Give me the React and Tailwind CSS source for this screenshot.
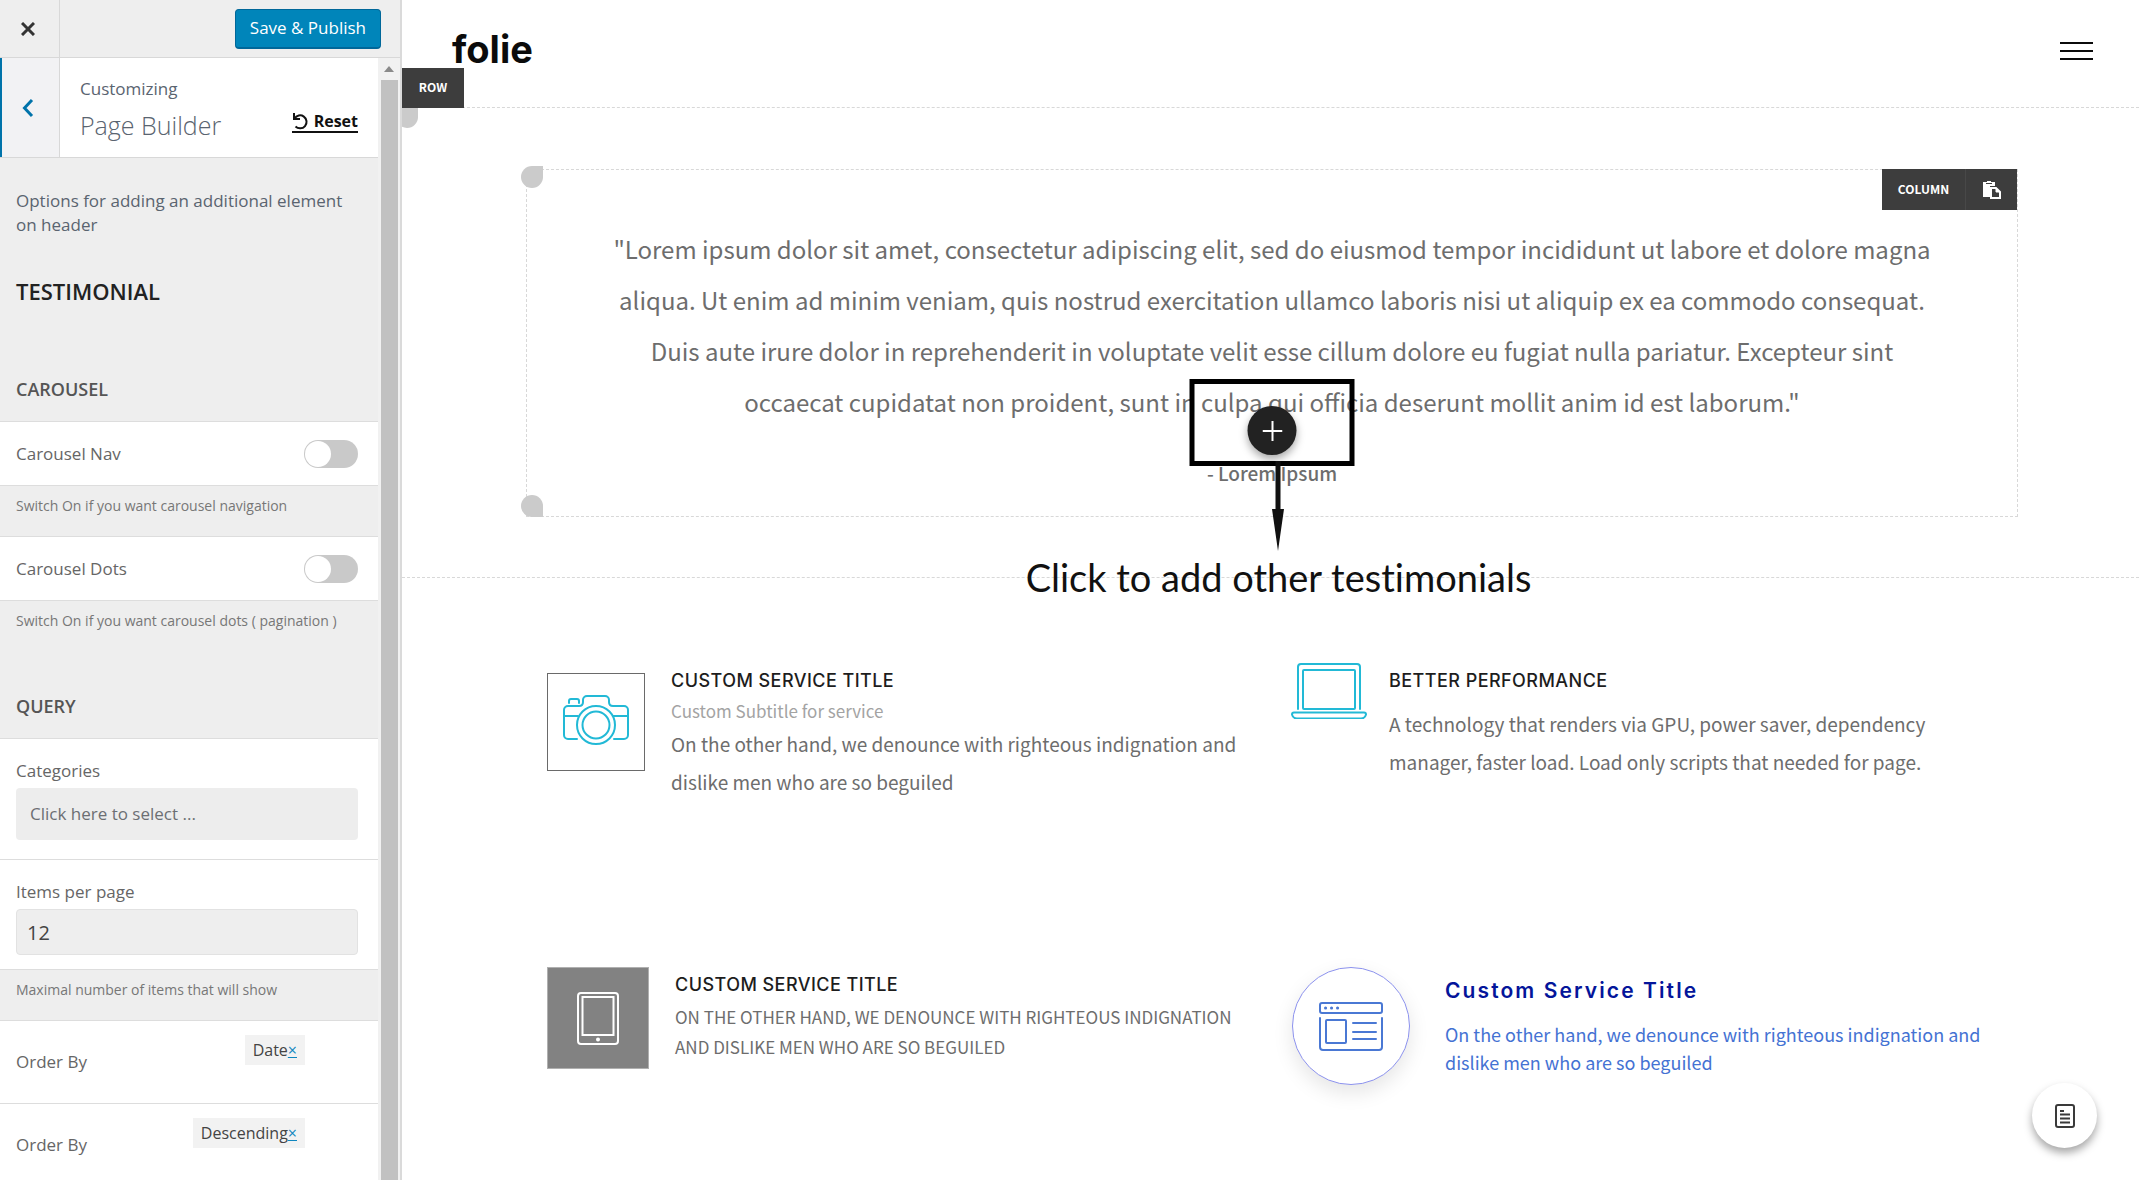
import React from "react";

const sans = "font-['Open_Sans','Noto_Sans',sans-serif]";
const body = "font-['Noto_Sans_CJK_SC','Noto_Sans',sans-serif]";
const capsTitle = "font-['Inter',sans-serif] text-lg leading-7 font-medium tracking-wide text-[#1d1d1d]";

function CameraIcon() {
  return (
    <svg viewBox="0 0 66 50" className="h-[50px] w-[66px]" fill="none" stroke="#22b9d6" strokeWidth="2" strokeLinecap="round">
      <path d="M14 44H5a4 4 0 0 1-4-4V15a4 4 0 0 1 4-4h11c3 0 4-1 4-4V5a4 4 0 0 1 4-4h18a4 4 0 0 1 4 4v2c0 3 1 4 4 4h11a4 4 0 0 1 4 4v25a4 4 0 0 1-4 4h-10" />
      <path d="M6 8V6a2 2 0 0 1 2-2h6a2 2 0 0 1 2 2v2M1 21h14M50 21h15" />
      <circle cx="33" cy="30" r="19" />
      <circle cx="33" cy="30" r="13.500" />
    </svg>
  );
}

function LaptopIcon() {
  return (
    <svg viewBox="0 0 76 56" className="h-14 w-[76px] shrink-0" fill="none" stroke="#22b9d6" strokeWidth="2" strokeLinecap="round">
      <path d="M7 46V4a3 3 0 0 1 3-3h56a3 3 0 0 1 3 3v42" />
      <rect x="12" y="7" width="52" height="39" rx="1" />
      <path d="M3 49.500h70q2 0 2 2v0q-1 4-5 4H6q-4 0-5-4v0q0-2 2-2z" />
    </svg>
  );
}

function TabletIcon() {
  return (
    <svg viewBox="0 0 42 53" className="h-[53px] w-[42px]" fill="none" stroke="#ffffff" strokeWidth="2">
      <rect x="1" y="1" width="40" height="51" rx="3" />
      <rect x="5.500" y="5" width="31" height="38" />
      <circle cx="21" cy="47.500" r="1" fill="#ffffff" />
    </svg>
  );
}

function BrowserIcon() {
  return (
    <svg viewBox="0 0 64 49" className="h-[49px] w-16" fill="none" stroke="#4a78d4" strokeWidth="2" strokeLinecap="round">
      <rect x="1" y="1" width="62" height="10" rx="2" />
      <path d="M1 16v29a3 3 0 0 0 3 3h56a3 3 0 0 0 3-3V16" />
      <rect x="7" y="18" width="20" height="23" rx="1" />
      <path d="M34 21h23M34 30h23M34 37h23" />
      <path d="M6.500 6h.1M12.500 6h.1M18.500 6h.1" strokeWidth="3" />
    </svg>
  );
}

function Handle({ className }) {
  return <span className={`absolute size-[22px] rounded-full bg-[#cbcbcb] ${className}`} />;
}

function Toggle({ label, id }) {
  return (
    <div className="flex h-[64px] items-center justify-between border-b border-[#dddddd] bg-white pr-5 pl-4">
      <label htmlFor={id} className="text-[17px] text-[#666666]">{label}</label>
      <input
        id={id}
        type="checkbox"
        role="switch"
        className="h-7 w-[54px] cursor-pointer appearance-none rounded-full bg-[#c9c9c9] p-px before:block before:size-[26px] before:rounded-full before:bg-white checked:bg-[#0085ba] checked:before:ml-auto"
      />
    </div>
  );
}

function Hint({ children }) {
  return <p className="h-[51px] border-b border-[#dddddd] px-4 pt-2 text-sm leading-6 text-[#777777]">{children}</p>;
}

function GroupTitle({ children }) {
  return <h3 className="px-4 text-lg leading-6 font-semibold text-[#555555]">{children}</h3>;
}

function OrderRow({ value }) {
  return (
    <div className="flex h-[83px] items-center justify-between border-b border-[#dddddd] bg-white pr-[73px] pl-4">
      <span className="text-[17px] text-[#666666]">Order By</span>
      <span className="mb-6 flex h-[30px] items-center bg-[#f2f2f2] px-2 text-base text-[#444444]">
        {value}
        <a href="#remove" aria-label={`Remove ${value}`} className="text-[#0e86bf] underline">×</a>
      </span>
    </div>
  );
}

function Sidebar() {
  return (
    <aside className={`flex w-[402px] shrink-0 flex-col border-r-2 border-[#dadada] bg-[#eeeeee] ${sans}`}>
      <div className="flex h-[58px] shrink-0 items-center justify-between border-b border-[#d8d8d8] pr-[19px]">
        <button aria-label="Close" className="flex h-full w-[60px] items-center justify-center border-r border-[#d8d8d8] pr-1">
          <svg viewBox="0 0 14 14" className="size-3.5" stroke="#333333" strokeWidth="3"><path d="M1 1l12 12M13 1L1 13" /></svg>
        </button>
        <button className="h-10 rounded-[4px] border border-b-2 border-[#006799] bg-[#0085ba] px-3.5 text-[17px] text-white">
          Save &amp; Publish
        </button>
      </div>
      <div className="flex flex-1">
        <div className="flex min-w-0 flex-1 flex-col">
          <div className="flex h-[100px] shrink-0 border-b border-[#d8d8d8] bg-white">
            <button aria-label="Back" className="flex w-[60px] shrink-0 items-center justify-center border-r border-l-2 border-r-[#d8d8d8] border-l-[#0073aa] bg-[#f2f2f4] pr-1.5">
              <svg viewBox="0 0 12 20" className="h-5 w-3" fill="none" stroke="#0073aa" strokeWidth="3"><path d="M10 2L2.500 10l7.500 8" /></svg>
            </button>
            <div className="flex flex-1 items-end justify-between pr-5 pb-4 pl-5">
              <div className="text-[#5a6470]">
                <div className="text-[17px] leading-6">Customizing</div>
                <h1 className="mt-2 text-[25px] leading-8 font-light">Page Builder</h1>
              </div>
              <button className="mb-2 flex items-center gap-1.5 border-b-2 border-[#111111] text-base leading-5 font-bold text-[#111111]">
                <svg viewBox="0 0 16 18" className="h-[18px] w-4" fill="none" stroke="#111111" strokeWidth="2"><path d="M2 1v6h6M2.500 6.500a6.500 6.500 0 1 1 1 8" /></svg>
                Reset
              </button>
            </div>
          </div>
          <p className="mt-[31px] px-4 text-[17px] leading-6 text-[#5a6470]">Options for adding an additional element on header</p>
          <h2 className="mt-10 px-4 text-[22px] leading-7 font-semibold text-[#222222]">TESTIMONIAL</h2>
          <div className="mt-[72px] border-b border-[#dddddd] pb-5"><GroupTitle>CAROUSEL</GroupTitle></div>
          <Toggle id="nav" label="Carousel Nav" />
          <Hint>Switch On if you want carousel navigation</Hint>
          <Toggle id="dots" label="Carousel Dots" />
          <p className="px-4 pt-2 text-sm leading-6 text-[#777777]">Switch On if you want carousel dots ( pagination )</p>
          <div className="mt-[61px] border-b border-[#dddddd] pb-5"><GroupTitle>QUERY</GroupTitle></div>
          <div className="border-b border-[#dddddd] bg-white px-4 pt-5 pb-[19px]">
            <label htmlFor="categories" className="block text-[17px] leading-6 text-[#666666]">Categories</label>
            <select id="categories" className="mt-[5px] block h-[52px] w-[342px] appearance-none rounded-[4px] bg-[#ededed] px-3.5 text-[17px] text-[#6c6f73]">
              <option>Click here to select ...</option>
            </select>
          </div>
          <div className="border-b border-[#dddddd] bg-white px-4 pt-5 pb-[14px]">
            <label htmlFor="items" className="block text-[17px] leading-6 text-[#666666]">Items per page</label>
            <input id="items" defaultValue="12" className="mt-[5px] block h-[46px] w-[342px] rounded-[4px] border border-[#e2e2e2] bg-[#eeeeee] px-2.5 text-xl text-[#444444]" />
          </div>
          <Hint>Maximal number of items that will show</Hint>
          <OrderRow value="Date" />
          <div className="flex-1 bg-white"><OrderRow value="Descending" /></div>
        </div>
        <div className="flex w-[22px] shrink-0 flex-col items-center bg-[#f1f1f1] pt-2">
          <svg viewBox="0 0 10 6" className="h-1.5 w-2.5" fill="#8a8a8a"><path d="M0 6L5 0l5 6z" /></svg>
          <div className="mt-2 w-[17px] flex-1 bg-[#c1c1c1]" />
        </div>
      </div>
    </aside>
  );
}

function Testimonial() {
  return (
    <section className="relative border-b border-dashed border-[#d8d8d8] pt-[61px] pr-[121px] pb-[60px] pl-[124px]">
      <div className="absolute top-0 left-0 h-5 w-4 overflow-hidden">
        <span className="-mt-0.5 -ml-1.5 block size-[22px] rounded-full rounded-tr-none bg-[#cbcbcb]" />
      </div>
      <span className="absolute -top-10 left-0 flex h-10 w-[62px] items-center justify-center bg-[#3d3d3d] pb-0.5 text-xs font-bold text-white">ROW</span>
      <div className="relative border border-dashed border-[#d8d8d8] px-[74px] pt-[53px] pb-7 text-center text-[#6d6d6d]">
        <Handle className="-top-1 -left-1.5 rounded-tr-none" />
        <Handle className="-bottom-px -left-1.5 rounded-br-none" />
        <div className="absolute -top-px right-0 flex h-[41px] items-stretch bg-[#3d3d3d] text-xs font-bold text-white">
          <span className="flex w-[84px] items-center justify-center border-r border-[#484848] pb-0.5">COLUMN</span>
          <button aria-label="Paste" className="flex w-[51px] items-center justify-center">
            <svg viewBox="0 0 18 18" className="size-[18px]">
              <path d="M0 1h4V0h4v1h4v4H7v11H0z" fill="#ffffff" />
              <path d="M3 2.500h6" stroke="#3d3d3d" />
              <path d="M8 7h5l4 4v6H8z" fill="#3d3d3d" stroke="#ffffff" strokeWidth="2" />
              <path d="M13 7v4h4" fill="#ffffff" stroke="#ffffff" />
            </svg>
          </button>
        </div>
        <blockquote className="text-2xl leading-[51px]">
          "Lorem ipsum dolor sit amet, consectetur adipiscing elit, sed do eiusmod tempor incididunt ut labore et dolore magna aliqua. Ut enim ad minim veniam, quis nostrud exercitation ullamco laboris nisi ut aliquip ex ea commodo consequat. Duis aute irure dolor in reprehenderit in voluptate velit esse cillum dolore eu fugiat nulla pariatur. Excepteur sint occaecat cupidatat non proident, sunt in culpa qui officia deserunt mollit anim id est laborum."
        </blockquote>
        <p className="mt-8 mb-px text-[19px] leading-7 font-medium">- Lorem Ipsum</p>
        <div className="absolute bottom-[50px] left-1/2 flex h-[87px] w-[165px] -translate-x-1/2 items-center justify-center border-5 border-black">
          <button aria-label="Add testimonial" className="mt-4 flex size-[49px] items-center justify-center rounded-full bg-[#222222] shadow-[0_4px_8px_rgba(0,0,0,0.35)]">
            <svg viewBox="0 0 20 20" className="size-5" stroke="#ffffff" strokeWidth="2"><path d="M10 0v20M0 10h20" /></svg>
          </button>
        </div>
        <svg viewBox="0 0 12 90" className="absolute -bottom-[35px] left-1/2 h-[90px] w-3" fill="#111111"><path d="M3.500 0h5v48h3.500L6 90 0 48h3.500z" /></svg>
      </div>
      <p className="absolute bottom-0 left-1/2 -translate-x-1/2 translate-y-1/2 pl-4 font-['Lato',sans-serif] text-[38px] leading-[48px] whitespace-nowrap text-[#111111] [font-variant-ligatures:none]">
        Click to add other testimonials
      </p>
    </section>
  );
}

function Services() {
  return (
    <section className="grid auto-rows-[304px] grid-cols-2 pt-[85px] pr-[121px] pl-[124px] text-[#6d6d6d]">
      <article className="flex items-start gap-[26px] pr-5 pl-[21px]">
        <div className="mt-2.5 flex size-[98px] shrink-0 items-center justify-center border border-[#6a6a6a] pb-1"><CameraIcon /></div>
        <div className="pt-1">
          <h3 className={capsTitle}>CUSTOM SERVICE TITLE</h3>
          <p className="mt-0.5 text-[17px] leading-7 text-[#a3a3a3]">Custom Subtitle for service</p>
          <p className="text-[19px] leading-[38px]">On the other hand, we denounce with righteous indignation and dislike men who are so beguiled</p>
        </div>
      </article>
      <article className="flex items-start gap-[22px] pr-5 pl-[19px]">
        <LaptopIcon />
        <div className="pt-1">
          <h3 className={capsTitle}>BETTER PERFORMANCE</h3>
          <p className="mt-2.5 max-w-[580px] text-[19px] leading-[38px]">A technology that renders via GPU, power saver, dependency manager, faster load. Load only scripts that needed for page.</p>
        </div>
      </article>
      <article className="flex items-start gap-[26px] pr-5 pl-[21px]">
        <div className="flex size-[102px] shrink-0 items-center justify-center border border-[#b0b0b0] bg-[#828282]"><TabletIcon /></div>
        <div className="pt-1">
          <h3 className={capsTitle}>CUSTOM SERVICE TITLE</h3>
          <p className="mt-[3px] text-[17px] leading-[30px]">ON THE OTHER HAND, WE DENOUNCE WITH RIGHTEOUS INDIGNATION AND DISLIKE MEN WHO ARE SO BEGUILED</p>
        </div>
      </article>
      <article className="flex items-start gap-[35px] pr-5 pl-5">
        <div className="flex size-[118px] shrink-0 items-center justify-center rounded-full border border-[#8c92ee] bg-white shadow-[0_8px_20px_rgba(0,0,0,0.1)]"><BrowserIcon /></div>
        <div className="pt-2.5">
          <h3 className="font-['Inter',sans-serif] text-[21px] leading-7 font-semibold tracking-widest text-[#04159a]">Custom Service Title</h3>
          <p className="mt-[15px] text-lg leading-7 text-[#4472d3]">On the other hand, we denounce with righteous indignation and dislike men who are so beguiled</p>
        </div>
      </article>
    </section>
  );
}

export default function App() {
  return (
    <div className="flex h-screen overflow-hidden bg-white">
      <Sidebar />
      <main className={`min-w-0 flex-1 ${body}`}>
        <header className="flex h-[108px] items-start justify-between border-b border-dashed border-[#d8d8d8] pr-[46px] pl-[50px]">
          <a href="#home" className="pt-[25px] font-['Inter',sans-serif] text-[38px] leading-[48px] font-bold text-[#0b0b0b]">folie</a>
          <button aria-label="Menu" className="mt-[42px] flex w-[33px] flex-col gap-1.5">
            <span className="h-0.5 w-full bg-[#0b0b0b]" />
            <span className="h-0.5 w-full bg-[#0b0b0b]" />
            <span className="h-0.5 w-full bg-[#0b0b0b]" />
          </button>
        </header>
        <Testimonial />
        <Services />
      </main>
      <button aria-label="Pages" className="fixed right-[42px] bottom-8 flex size-[65px] items-center justify-center rounded-full bg-white shadow-[0_5px_9px_rgba(0,0,0,0.35)]">
        <svg viewBox="0 0 20 24" className="h-6 w-5" fill="none" stroke="#3a3a3a" strokeWidth="2">
          <rect x="1" y="1" width="18" height="22" rx="2" />
          <path d="M5 7h4M5 10.500h10M5 14.500h10M5 18.500h10" />
        </svg>
      </button>
    </div>
  );
}
